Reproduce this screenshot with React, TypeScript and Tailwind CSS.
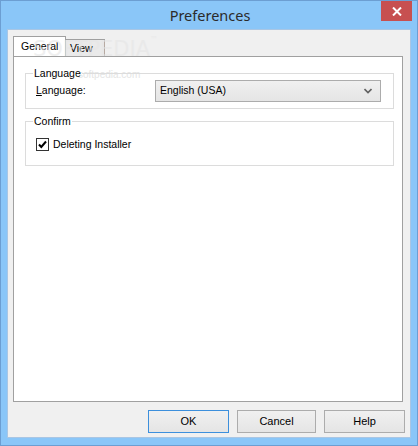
import React from "react";

export default function App() {
  const ui = { fontFamily: '"Liberation Sans", Arial, sans-serif' };
  return (
    <div className="w-[418px] h-[446px] bg-[#8ac6f8] border border-[#6c9ed2] flex flex-col px-[6px] pb-[7px]" style={ui}>
      {/* title bar */}
      <div className="h-[28px] relative flex items-center justify-center shrink-0">
        <span className="text-[14.5px] text-[#2b2b2b] mt-[1px] ml-[2px]" style={{ fontFamily: '"Noto Sans", "Open Sans", sans-serif' }}>Preferences</span>
        <div className="absolute right-[-1px] top-0 w-[31px] h-[20px] bg-[#c75050] flex items-center justify-center">
          <svg width="10" height="9" viewBox="0 0 10 9">
            <path d="M1 0.5 L9 8.5 M9 0.5 L1 8.5" stroke="white" strokeWidth="2" />
          </svg>
        </div>
      </div>
      {/* client */}
      <div className="flex-1 border border-[#a9c6e4] bg-[#f0f0f0] flex flex-col pl-[5px] pt-[7px] relative">
        {/* watermark */}
        <div className="absolute left-[25px] top-[4px] z-20 text-[21px] text-[#e6e6e6] opacity-60 pointer-events-none" style={{ fontFamily: '"DejaVu Sans", sans-serif' }}>SOFTPEDIA<span className="text-[8px] align-top">™</span></div>
        {/* tabs */}
        <div className="flex items-end h-[19px] relative z-10">
          <div className="h-[20px] w-[53px] bg-white border border-[#a0a0a0] border-b-0 text-[10.5px] text-black pl-[7px] pt-[2px]">General</div>
          <div className="h-[17px] w-[39px] bg-[#eaeaea] border border-[#a0a0a0] border-l-0 border-b-0 text-[10.5px] text-black pl-[4px] pt-[1px]">View</div>
        </div>
        <div className="w-[390px] h-[346px] bg-white border border-[#a0a0a0] relative pl-[11px] pr-[8px] pt-[10px]">
          <div className="absolute left-[64px] top-[10px] text-[10px] text-[#e4e4e4] pointer-events-none">softpedia.com</div>
          <fieldset className="border border-[#dcdcdc] h-[42px] relative">
            <legend className="ml-[7px] px-[1px] text-[10.5px] text-black leading-[13px]">Language</legend>
            <div className="flex items-center h-[22px]">
              <span className="ml-[10px] w-[119px] text-[10.5px] text-black"><span className="underline">L</span>anguage:</span>
              <div className="w-[226px] h-[22px] border border-[#acacac] bg-gradient-to-b from-[#f0f0f0] to-[#e5e5e5] flex items-center justify-between pl-[4px] pr-[8px] text-[10.5px] text-black">
                <span>English (USA)</span>
                <svg width="8" height="6" viewBox="0 0 8 6">
                  <path d="M0.5 1 L4 4.5 L7.5 1" stroke="#606060" strokeWidth="1.6" fill="none" />
                </svg>
              </div>
            </div>
          </fieldset>
          <fieldset className="border border-[#dcdcdc] h-[51px] mt-[6px]">
            <legend className="ml-[7px] px-[1px] text-[10.5px] text-black leading-[13px]">Confirm</legend>
            <div className="flex items-center ml-[10px] mt-[9px]">
              <div className="w-[13px] h-[13px] border border-[#333] bg-white flex items-center justify-center">
                <svg width="9" height="9" viewBox="0 0 9 9">
                  <path d="M1 4.5 L3.3 7 L8 1.5" stroke="black" strokeWidth="2" fill="none" />
                </svg>
              </div>
              <span className="ml-[4px] text-[10.5px] text-black">Deleting Installer</span>
            </div>
          </fieldset>
        </div>
        {/* buttons */}
        <div className="flex justify-end gap-[8px] pr-[5px] mt-[8px]">
          <button className="w-[81px] h-[23px] border border-[#3c8fdc] bg-gradient-to-b from-[#f0f0f0] to-[#e5e5e5] text-[11px] text-black">OK</button>
          <button className="w-[79px] h-[23px] border border-[#acacac] bg-gradient-to-b from-[#f0f0f0] to-[#e5e5e5] text-[11px] text-black">Cancel</button>
          <button className="w-[81px] h-[23px] border border-[#acacac] bg-gradient-to-b from-[#f0f0f0] to-[#e5e5e5] text-[11px] text-black">Help</button>
        </div>
      </div>
    </div>
  );
}
